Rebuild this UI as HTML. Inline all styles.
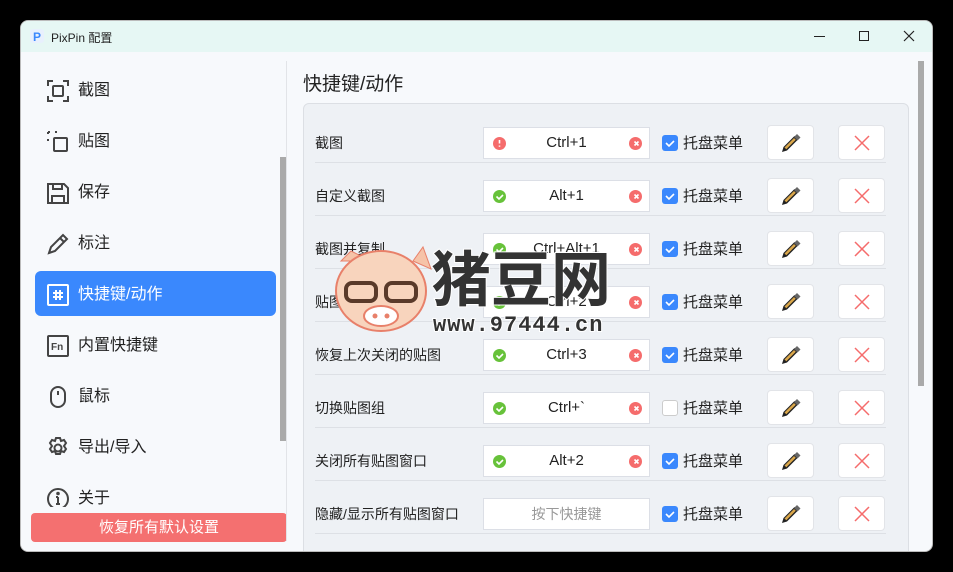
<!DOCTYPE html>
<html><head><meta charset="utf-8"><style>
*{margin:0;padding:0;box-sizing:border-box}
body{width:953px;height:572px;background:#000;position:relative;overflow:hidden;font-family:"Liberation Sans","Noto Sans CJK SC",sans-serif;color:#222}
.win{position:absolute;left:20px;top:20px;width:913px;height:532px;background:#f7f9fc;border-radius:8px;overflow:hidden;border:1px solid #bbb}
.title{position:absolute;left:0;top:0;width:100%;height:31px;background:#e6f7f4}
.title .t{position:absolute;left:30px;top:8px;font-size:12px;color:#222}
.abs{position:absolute}
.nav{position:absolute;left:57px;font-size:16px;color:#222;margin-top:-2px}
.ic{position:absolute;left:25px}
.active{position:absolute;left:14px;top:250px;width:241px;height:45px;background:#3a88fd;border-radius:6px}
.card{position:absolute;left:282px;top:82px;width:606px;height:470px;background:#eef1f5;border:1px solid #dcdfe4;border-radius:6px}
.lbl{position:absolute;left:294px;font-size:14px;color:#222}
.inp{position:absolute;left:462px;width:167px;height:32px;background:#fff;border:1px solid #dcdfe6;font-size:15px;text-align:center;line-height:30px;color:#222}
.line{position:absolute;left:294px;width:571px;height:1px;background:#dde0e5}
.cb{position:absolute;left:641px;width:16px;height:16px;border-radius:3px;background:#3a88fd}
.cb.off{background:#fff;border:1px solid #ccc}
.tp{position:absolute;left:662px;font-size:15px;color:#222;margin-top:-1px}
.btn{position:absolute;width:47px;height:35px;background:#fff;border:1px solid #e2e4e8;border-radius:4px}
.st{position:absolute;left:9px;top:9px;width:13px;height:13px;border-radius:50%}
.clr{position:absolute;right:7px;top:9px;width:13px;height:13px;border-radius:50%;background:#f56c6c}
</style></head><body>
<div class="win">
<div class="title">
<svg class="abs" style="left:9px;top:8px" width="14" height="14"><rect width="14" height="14" rx="3" fill="#e8f0fd"/><text x="3" y="12" font-size="12" font-weight="bold" fill="#3a88fd" font-family="Liberation Sans">P</text></svg>
<div class="t">PixPin 配置</div>
<div class="abs" style="left:793px;top:15px;width:11px;height:1px;background:#222"></div>
<div class="abs" style="left:838px;top:10px;width:10px;height:10px;border:1px solid #222"></div>
<svg class="abs" style="left:882px;top:9px" width="12" height="12"><path d="M1 1L11 11M11 1L1 11" stroke="#222" stroke-width="1.2"/></svg>
</div>

<div class="active"></div>
<svg class="ic" style="top:58px" width="24" height="24" fill="none" stroke="#444" stroke-width="2"><path d="M2 7V2h5M17 2h5v5M22 17v5h-5M7 22H2v-5"/><rect x="7" y="7" width="10" height="10" rx="1"/></svg>
<div class="nav" style="top:57px">截图</div>
<svg class="ic" style="top:109px" width="24" height="24" fill="none" stroke="#444" stroke-width="2"><path d="M2 2h3M2 2v3M2 9v3M9 2h3" stroke-dasharray="2 2"/><rect x="8" y="8" width="13" height="13" rx="1"/></svg>
<div class="nav" style="top:108px">贴图</div>
<svg class="ic" style="top:160px" width="24" height="24" fill="none" stroke="#444" stroke-width="2"><path d="M2 3h16l4 4v15H2z"/><path d="M7 3v5h9V3M6 22v-7h12v7"/></svg>
<div class="nav" style="top:159px">保存</div>
<svg class="ic" style="top:211px" width="24" height="24" fill="none" stroke="#444" stroke-width="2"><path d="M3 21l2-6L17 3l4 4L9 19z"/><path d="M14 6l4 4"/></svg>
<div class="nav" style="top:210px">标注</div>
<svg class="ic" style="top:262px" width="24" height="24" fill="none" stroke="#fff" stroke-width="2"><rect x="2" y="2" width="20" height="20" rx="1"/><path d="M10 7v10M14 7v10M7 10h10M7 14h10"/></svg>
<div class="nav" style="top:261px;color:#fff">快捷键/动作</div>
<svg class="ic" style="top:313px" width="24" height="24" fill="none" stroke="#444" stroke-width="2"><rect x="2" y="2" width="20" height="20" rx="1"/><text x="5" y="16" font-size="10" font-weight="bold" fill="#444" stroke="none" font-family="Liberation Sans">Fn</text></svg>
<div class="nav" style="top:312px">内置快捷键</div>
<svg class="ic" style="top:364px" width="24" height="24" fill="none" stroke="#444" stroke-width="2"><rect x="5" y="2" width="14" height="20" rx="7"/><path d="M12 6v4"/></svg>
<div class="nav" style="top:363px">鼠标</div>
<svg class="ic" style="top:415px" width="24" height="24" fill="none" stroke="#444" stroke-width="2"><circle cx="12" cy="12" r="3.5"/><path d="M10 2h4l1 3 3-1 2 3-2 3 2 3-2 3-3-1-1 3h-4l-1-3-3 1-2-3 2-3-2-3 2-3 3 1z"/></svg>
<div class="nav" style="top:414px">导出/导入</div>
<svg class="ic" style="top:466px" width="24" height="24" fill="none" stroke="#444" stroke-width="2"><circle cx="12" cy="12" r="10"/><path d="M12 10v7M10 17h4M10 10h2"/><circle cx="12" cy="6.5" r=".8" fill="#444"/></svg>
<div class="nav" style="top:465px">关于</div>
<div class="abs" style="left:0;top:486px;width:270px;height:46px;background:#f7f9fc"></div>
<div class="abs" style="left:10px;top:492px;width:256px;height:29px;background:#f47070;border-radius:4px;color:#fff;font-size:15px;text-align:center;line-height:29px">恢复所有默认设置</div>
<div class="abs" style="left:259px;top:136px;width:6px;height:284px;background:#aaa"></div>
<div class="abs" style="left:265px;top:40px;width:1px;height:480px;background:#e2e4e8"></div>

<div class="abs" style="left:282px;top:48px;font-size:19px;color:#222">快捷键/动作</div>
<div class="card"></div>
<div class="abs" style="left:897px;top:40px;width:6px;height:325px;background:#aaa"></div>

<div class="lbl" style="top:112px">截图</div><div class="inp" style="top:106px"><div class="st" style="background:#f56c6c"></div>Ctrl+1<div class="clr"></div></div><div class="cb" style="top:114px"></div><div class="tp" style="top:112px">托盘菜单</div><div class="line" style="top:141px"></div>
<div class="lbl" style="top:165px">自定义截图</div><div class="inp" style="top:159px"><div class="st" style="background:#67c23a"></div>Alt+1<div class="clr"></div></div><div class="cb" style="top:167px"></div><div class="tp" style="top:165px">托盘菜单</div><div class="line" style="top:194px"></div>
<div class="lbl" style="top:218px">截图并复制</div><div class="inp" style="top:212px"><div class="st" style="background:#67c23a"></div>Ctrl+Alt+1<div class="clr"></div></div><div class="cb" style="top:220px"></div><div class="tp" style="top:218px">托盘菜单</div><div class="line" style="top:247px"></div>
<div class="lbl" style="top:271px">贴图</div><div class="inp" style="top:265px"><div class="st" style="background:#67c23a"></div>Ctrl+2<div class="clr"></div></div><div class="cb" style="top:273px"></div><div class="tp" style="top:271px">托盘菜单</div><div class="line" style="top:300px"></div>
<div class="lbl" style="top:324px">恢复上次关闭的贴图</div><div class="inp" style="top:318px"><div class="st" style="background:#67c23a"></div>Ctrl+3<div class="clr"></div></div><div class="cb" style="top:326px"></div><div class="tp" style="top:324px">托盘菜单</div><div class="line" style="top:353px"></div>
<div class="lbl" style="top:377px">切换贴图组</div><div class="inp" style="top:371px"><div class="st" style="background:#67c23a"></div>Ctrl+`<div class="clr"></div></div><div class="cb off" style="top:379px"></div><div class="tp" style="top:377px">托盘菜单</div><div class="line" style="top:406px"></div>
<div class="lbl" style="top:430px">关闭所有贴图窗口</div><div class="inp" style="top:424px"><div class="st" style="background:#67c23a"></div>Alt+2<div class="clr"></div></div><div class="cb" style="top:432px"></div><div class="tp" style="top:430px">托盘菜单</div><div class="line" style="top:459px"></div>
<div class="lbl" style="top:483px">隐藏/显示所有贴图窗口</div><div class="inp" style="top:477px;color:#999;font-size:14px">按下快捷键</div><div class="cb" style="top:485px"></div><div class="tp" style="top:483px">托盘菜单</div><div class="line" style="top:512px"></div>

<div class="btn" style="left:746px;top:104px"></div><div class="btn" style="left:817px;top:104px"></div>
<div class="btn" style="left:746px;top:157px"></div><div class="btn" style="left:817px;top:157px"></div>
<div class="btn" style="left:746px;top:210px"></div><div class="btn" style="left:817px;top:210px"></div>
<div class="btn" style="left:746px;top:263px"></div><div class="btn" style="left:817px;top:263px"></div>
<div class="btn" style="left:746px;top:316px"></div><div class="btn" style="left:817px;top:316px"></div>
<div class="btn" style="left:746px;top:369px"></div><div class="btn" style="left:817px;top:369px"></div>
<div class="btn" style="left:746px;top:422px"></div><div class="btn" style="left:817px;top:422px"></div>
<div class="btn" style="left:746px;top:475px"></div><div class="btn" style="left:817px;top:475px"></div>
<svg class="abs" style="left:0;top:0" width="913" height="532">
<defs>
<g id="pen"><path d="M-9 9l1.5-5 11-11 3.5 3.5-11 11z" fill="#222"/><path d="M-6.5 4.5l9.5-9.5 1.8 1.8-9.5 9.5z" fill="#d9a64a"/><path d="M3-6l3-3 3.5 3.5-3 3z" fill="#666"/></g>
<g id="x"><path d="M-7 -7L7 7M7 -7L-7 7" stroke="#f56c6c" stroke-width="1.5"/></g>
<g id="ck"><path d="M-4 0l3 3 5-5" stroke="#fff" stroke-width="1.6" fill="none"/></g>
</defs>
<g fill="none">
<use href="#pen" x="770" y="122"/><use href="#x" x="841" y="122"/>
<use href="#pen" x="770" y="175"/><use href="#x" x="841" y="175"/>
<use href="#pen" x="770" y="228"/><use href="#x" x="841" y="228"/>
<use href="#pen" x="770" y="281"/><use href="#x" x="841" y="281"/>
<use href="#pen" x="770" y="334"/><use href="#x" x="841" y="334"/>
<use href="#pen" x="770" y="387"/><use href="#x" x="841" y="387"/>
<use href="#pen" x="770" y="440"/><use href="#x" x="841" y="440"/>
<use href="#pen" x="770" y="493"/><use href="#x" x="841" y="493"/>
</g>
<g><use href="#ck" x="649" y="122"/><use href="#ck" x="649" y="175"/><use href="#ck" x="649" y="228"/><use href="#ck" x="649" y="281"/><use href="#ck" x="649" y="334"/><use href="#ck" x="649" y="440"/><use href="#ck" x="649" y="493"/></g>
<g stroke="#fff" stroke-width="1.6" fill="none">
<path d="M613.5 120.5l4 4M617.5 120.5l-4 4"/><path d="M613.5 173.5l4 4M617.5 173.5l-4 4"/><path d="M613.5 226.5l4 4M617.5 226.5l-4 4"/><path d="M613.5 279.5l4 4M617.5 279.5l-4 4"/><path d="M613.5 332.5l4 4M617.5 332.5l-4 4"/><path d="M613.5 385.5l4 4M617.5 385.5l-4 4"/><path d="M613.5 438.5l4 4M617.5 438.5l-4 4"/>
<path d="M475.5 175.5l2.5 2.5 4-4M475.5 228.5l2.5 2.5 4-4M475.5 281.5l2.5 2.5 4-4M475.5 334.5l2.5 2.5 4-4M475.5 387.5l2.5 2.5 4-4M475.5 440.5l2.5 2.5 4-4"/>
<path d="M478.5 119v3.5M478.5 124.5v1.2"/>
</g>
<g>
<path d="M320 240l10-10 20 10z" fill="#f6c3a8" stroke="#e8806a"/>
<path d="M392 240l10-14 8 22z" fill="#f6c3a8" stroke="#e8806a"/>
<ellipse cx="360" cy="270" rx="45" ry="40" fill="#f8d4bd" stroke="#e8806a" stroke-width="2"/>
<rect x="325" y="262" width="30" height="18" rx="6" fill="none" stroke="#5a3a2a" stroke-width="4"/>
<rect x="365" y="262" width="30" height="18" rx="6" fill="none" stroke="#5a3a2a" stroke-width="4"/>
<ellipse cx="360" cy="295" rx="17" ry="10" fill="#fff" stroke="#e8806a" stroke-width="2"/>
<circle cx="354" cy="295" r="2.5" fill="#e8806a"/><circle cx="366" cy="295" r="2.5" fill="#e8806a"/>
</g>
<text x="410" y="280" font-size="60" font-weight="bold" fill="#333" stroke="#fff" stroke-width="2" paint-order="stroke" font-family="Noto Sans CJK SC,sans-serif">猪豆网</text>
<text x="412" y="310" font-size="22" font-weight="bold" fill="#333" stroke="#fff" stroke-width="2" paint-order="stroke" font-family="Liberation Mono,monospace" letter-spacing="1">www.97444.cn</text>
</svg>
</div>
</body></html>
